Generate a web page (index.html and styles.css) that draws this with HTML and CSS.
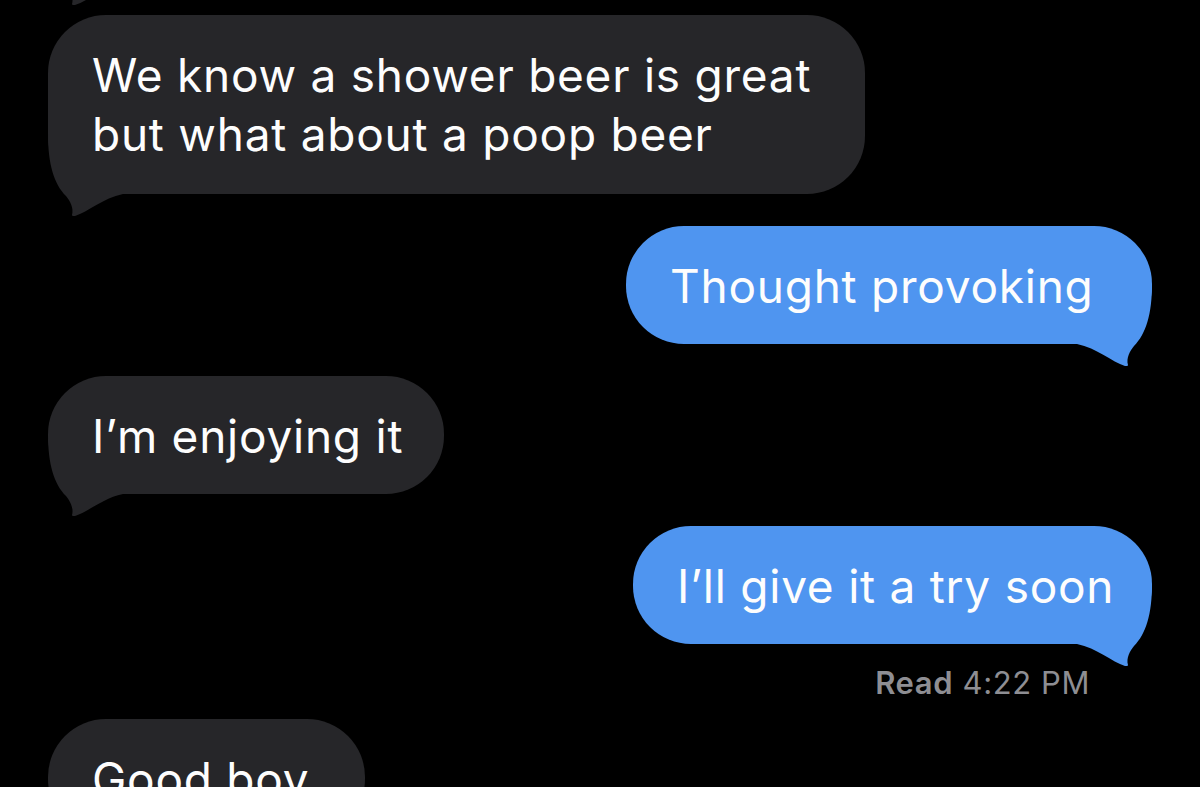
FILE: index.html
```html
<!DOCTYPE html>
<html>
<head>
<meta charset="utf-8">
<link rel="stylesheet" href="styles.css">
</head>
<body>
<div class="thread">
  <div class="bubble recv ghost">
    <span class="msg">&nbsp;</span>
    <svg class="tail" viewBox="0 0 75 84"><path d="M0 0 C0 30 6 50 18 62 C22 67 26 74 24 81 C24 82 25 82 27 82 C40 78 55 64 75 60 L75 0 Z"/></svg>
  </div>
  <div class="bubble recv w1">
    <span class="msg">We know a shower beer is great<br>but what about a poop beer</span>
    <svg class="tail" viewBox="0 0 75 84"><path d="M0 0 C0 30 6 50 18 62 C22 67 26 74 24 81 C24 82 25 82 27 82 C40 78 55 64 75 60 L75 0 Z"/></svg>
  </div>
  <div class="bubble sent w2">
    <span class="msg">Thought provoking</span>
    <svg class="tail" viewBox="0 0 75 84"><path d="M0 0 C0 30 6 50 18 62 C22 67 26 74 24 81 C24 82 25 82 27 82 C40 78 55 64 75 60 L75 0 Z"/></svg>
  </div>
  <div class="bubble recv w3">
    <span class="msg">I’m enjoying it</span>
    <svg class="tail" viewBox="0 0 75 84"><path d="M0 0 C0 30 6 50 18 62 C22 67 26 74 24 81 C24 82 25 82 27 82 C40 78 55 64 75 60 L75 0 Z"/></svg>
  </div>
  <div class="bubble sent w4 last-sent">
    <span class="msg">I’ll give it a try soon</span>
    <svg class="tail" viewBox="0 0 75 84"><path d="M0 0 C0 30 6 50 18 62 C22 67 26 74 24 81 C24 82 25 82 27 82 C40 78 55 64 75 60 L75 0 Z"/></svg>
  </div>
  <div class="receipt"><b>Read</b> 4:22 PM</div>
  <div class="bubble recv w5">
    <span class="msg">Good boy</span>
  </div>
</div>
</body>
</html>
```

FILE: styles.css
```css
html, body {
  margin: 0;
  padding: 0;
  background: #000;
  height: 100%;
  overflow: hidden;
}

.thread {
  display: flex;
  flex-direction: column;
  padding: 15px 48px 0 48px;
  font-family: Inter, "Liberation Sans", sans-serif;
}

.bubble {
  position: relative;
  box-sizing: border-box;
  height: 118px;
  padding: 31px 0 0 44px;
  border-radius: 58px;
  font-size: 46px;
  line-height: 59px;
  color: #fdfdfd;
  white-space: nowrap;
  margin-bottom: 32px;
  letter-spacing: 0.75px;
}

.recv {
  align-self: flex-start;
  background: #262629;
}

.recv .tail {
  fill: #262629;
}

.sent {
  align-self: flex-end;
  background: #4f95f0;
}

.sent .tail {
  fill: #4f95f0;
  left: auto;
  right: 0;
  transform: scaleX(-1);
}

.msg {
  position: relative;
  z-index: 1;
}

.tail {
  position: absolute;
  left: 0;
  bottom: -24px;
  width: 75px;
  height: 84px;
  z-index: 0;
}

.ghost {
  width: 400px;
  margin-top: -150px;
}

.w1 { width: 817px; height: 179px; }
.w2 { width: 526px; }
.w3 { width: 396px; }
.w4 { width: 519px; }
.w5 { width: 317px; margin-bottom: 0; }

.last-sent {
  margin-bottom: 0;
}

.receipt {
  align-self: flex-end;
  margin: 21px 62px 18px 0;
  font-family: Inter, "Liberation Sans", sans-serif;
  font-size: 31px;
  line-height: 36px;
  letter-spacing: 0.6px;
  color: #8e8e93;
}

.receipt b {
  font-weight: 600;
}
```
